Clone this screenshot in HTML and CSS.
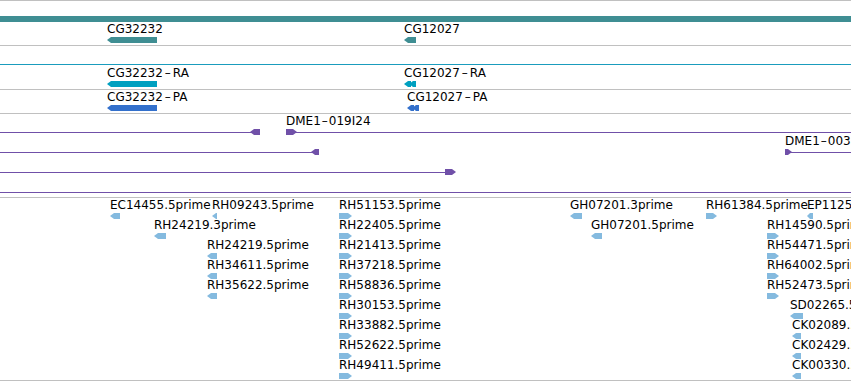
FILE: index.html
```html
<!DOCTYPE html>
<html lang="en">
<head>
  <meta charset="UTF-8">
  <title>Genome browser tracks</title>
  <link rel="stylesheet" href="styles.css">
</head>
<body>
  <div class="browser">
    <!-- gene track -->
    <section class="track track-gene">
      <div class="span-bar"></div>
      <div class="row row-gene">
        <div class="feat" style="left:107px">
          <div class="label">CG32232</div>
          <div class="glyph left c-gene" style="width:50px"></div>
        </div>
        <div class="feat" style="left:404px">
          <div class="label">CG12027</div>
          <div class="glyph left c-gene" style="width:12px"></div>
        </div>
      </div>
    </section>

    <section class="track track-empty"></section>

    <!-- transcripts -->
    <section class="track track-rna">
      <div class="row row-rna">
        <div class="feat" style="left:107px">
          <div class="label">CG32232<span class="dash">–</span>RA</div>
          <div class="glyph left c-rna" style="width:50px"></div>
        </div>
        <div class="feat" style="left:404px">
          <div class="label">CG12027<span class="dash">–</span>RA</div>
          <div class="chevs">
            <div class="chev c-rna"></div>
            <div class="chev c-rna"></div>
          </div>
        </div>
      </div>
    </section>

    <!-- polypeptides -->
    <section class="track track-pep">
      <div class="row row-pep">
        <div class="feat" style="left:107px">
          <div class="label">CG32232<span class="dash">–</span>PA</div>
          <div class="glyph left c-pep" style="width:50px"></div>
        </div>
        <div class="feat" style="left:407px">
          <div class="label">CG12027<span class="dash">–</span>PA</div>
          <div class="chevs">
            <div class="chev c-pep"></div>
            <div class="chev c-pep"></div>
          </div>
        </div>
      </div>
    </section>

    <!-- BAC clones -->
    <section class="track track-bac">
      <div class="row">
        <div class="bac-line" style="left:0;width:252px"></div>
        <div class="head left" style="left:250px;width:10px"></div>
        <div class="feat" style="left:286px">
          <div class="label">DME1<span class="dash short">–</span>019I24</div>
          <div class="head right static" style="width:11px"></div>
        </div>
        <div class="bac-line" style="left:290px;right:0"></div>
      </div>
      <div class="row">
        <div class="bac-line" style="left:0;width:313px"></div>
        <div class="head left" style="left:311px;width:8px"></div>
        <div class="feat" style="left:785px">
          <div class="label">DME1<span class="dash short">–</span>003</div>
          <div class="head right static" style="width:7px"></div>
        </div>
        <div class="bac-line" style="left:788px;right:0"></div>
      </div>
      <div class="row">
        <div class="bac-line" style="left:0;width:450px"></div>
        <div class="head right" style="left:445px;width:11px"></div>
      </div>
      <div class="row">
        <div class="bac-line" style="left:0;right:0"></div>
      </div>
    </section>

    <!-- ESTs -->
    <section class="track track-est">
      <div class="row">
        <div class="feat" style="left:110px"><div class="label">EC14455.5prime</div><div class="glyph left c-est" style="width:10px"></div></div>
        <div class="feat" style="left:212px"><div class="label">RH09243.5prime</div><div class="glyph left c-est" style="width:5px"></div></div>
        <div class="feat" style="left:339px"><div class="label">RH51153.5prime</div><div class="glyph right c-est" style="width:13px"></div></div>
        <div class="feat" style="left:570px"><div class="label">GH07201.3prime</div><div class="glyph left c-est" style="width:12px"></div></div>
        <div class="feat" style="left:706px"><div class="label">RH61384.5prime</div><div class="glyph right c-est" style="width:11px"></div></div>
        <div class="feat" style="left:807px"><div class="label">EP1125</div><div class="glyph left c-est narrow" style="width:6px"></div></div>
      </div>
      <div class="row">
        <div class="feat" style="left:154px"><div class="label">RH24219.3prime</div><div class="glyph left c-est" style="width:12px"></div></div>
        <div class="feat" style="left:339px"><div class="label">RH22405.5prime</div><div class="glyph right c-est" style="width:13px"></div></div>
        <div class="feat" style="left:591px"><div class="label">GH07201.5prime</div><div class="glyph left c-est" style="width:11px"></div></div>
        <div class="feat" style="left:767px"><div class="label">RH14590.5prime</div><div class="glyph right c-est" style="width:12px"></div></div>
      </div>
      <div class="row">
        <div class="feat" style="left:207px"><div class="label">RH24219.5prime</div><div class="glyph left c-est" style="width:10px"></div></div>
        <div class="feat" style="left:339px"><div class="label">RH21413.5prime</div><div class="glyph right c-est" style="width:13px"></div></div>
        <div class="feat" style="left:767px"><div class="label">RH54471.5prime</div><div class="glyph right c-est" style="width:12px"></div></div>
      </div>
      <div class="row">
        <div class="feat" style="left:207px"><div class="label">RH34611.5prime</div><div class="glyph left c-est" style="width:10px"></div></div>
        <div class="feat" style="left:339px"><div class="label">RH37218.5prime</div><div class="glyph right c-est" style="width:13px"></div></div>
        <div class="feat" style="left:767px"><div class="label">RH64002.5prime</div><div class="glyph right c-est" style="width:12px"></div></div>
      </div>
      <div class="row">
        <div class="feat" style="left:207px"><div class="label">RH35622.5prime</div><div class="glyph left c-est" style="width:10px"></div></div>
        <div class="feat" style="left:339px"><div class="label">RH58836.5prime</div><div class="glyph right c-est" style="width:13px"></div></div>
        <div class="feat" style="left:767px"><div class="label">RH52473.5prime</div><div class="glyph right c-est" style="width:12px"></div></div>
      </div>
      <div class="row">
        <div class="feat" style="left:339px"><div class="label">RH30153.5prime</div><div class="glyph right c-est" style="width:13px"></div></div>
        <div class="feat" style="left:790px"><div class="label">SD02265.5prime</div><div class="glyph left c-est" style="width:13px"></div></div>
      </div>
      <div class="row">
        <div class="feat" style="left:339px"><div class="label">RH33882.5prime</div><div class="glyph right c-est" style="width:13px"></div></div>
        <div class="feat" style="left:792px"><div class="label">CK02089.5prime</div><div class="glyph left c-est" style="width:9px"></div></div>
      </div>
      <div class="row">
        <div class="feat" style="left:339px"><div class="label">RH52622.5prime</div><div class="glyph right c-est" style="width:13px"></div></div>
        <div class="feat" style="left:792px"><div class="label">CK02429.5prime</div><div class="glyph left c-est" style="width:9px"></div></div>
      </div>
      <div class="row">
        <div class="feat" style="left:339px"><div class="label">RH49411.5prime</div><div class="glyph right c-est" style="width:13px"></div></div>
        <div class="feat" style="left:792px"><div class="label">CK00330.5prime</div><div class="glyph left c-est" style="width:9px"></div></div>
      </div>
    </section>
  </div>
</body>
</html>
```

FILE: styles.css
```css
body {
  margin: 0;
  background: #fff;
  font-family: "DejaVu Sans", sans-serif;
  color: #000;
}
.browser {
  width: 851px;
  height: 381px;
  overflow: hidden;
  border-top: 1px solid #c0c0c0;
  box-sizing: border-box;
}
.track {
  position: relative;
  border-bottom: 1px solid #c0c0c0;
}
.track-gene {
  height: 29px;
  padding-top: 15px;
}
.span-bar {
  height: 6px;
  background: #3f8e93;
}
.track-empty {
  height: 18px;
  border-bottom-color: #1a9cbd;
}
.track-rna {
  height: 24px;
}
.track-pep {
  height: 23px;
}
.track-bac {
  height: 83px;
}
.track-est {
  height: 182px;
}
.row {
  position: relative;
  height: 20px;
}
.row-gene {
  height: 23px;
}
.row-rna {
  top: 1px;
}

/* features */
.feat {
  position: absolute;
  top: 0;
}
.label {
  font-size: 12px;
  line-height: 14px;
  white-space: nowrap;
}
.dash {
  display: inline-block;
  width: 10px;
  text-align: center;
}
.dash.short {
  width: 8px;
}
.glyph {
  height: 6px;
  margin-top: 1px;
}
.glyph.left {
  clip-path: polygon(0 50%, 4px 0, 100% 0, 100% 100%, 4px 100%);
}
.glyph.right {
  clip-path: polygon(0 0, calc(100% - 4px) 0, 100% 50%, calc(100% - 4px) 100%, 0 100%);
}
.glyph.narrow {
  clip-path: polygon(0 50%, 3px 0, 100% 0, 100% 100%, 3px 100%);
}
.chevs {
  display: flex;
  margin-top: 1px;
  height: 6px;
}
.chev {
  width: 7px;
  height: 6px;
  clip-path: polygon(0 50%, 4px 0, 100% 0, 100% 100%, 4px 100%);
}
.chev + .chev {
  margin-left: -2px;
}
.c-gene { background: #3f8e93; }
.c-rna { background: #00a0c0; }
.c-pep { background: #3370cc; }
.c-est { background: #84badf; }

/* BAC clone ends */
.bac-line {
  position: absolute;
  top: 18px;
  height: 1px;
  background: #7050a8;
}
.head {
  position: absolute;
  top: 15px;
  height: 6px;
  background: #7050a8;
}
.head.static {
  position: static;
  margin-top: 1px;
}
.head.left {
  clip-path: polygon(0 50%, 4px 0, 100% 0, 100% 100%, 4px 100%);
}
.head.right {
  clip-path: polygon(0 0, calc(100% - 4px) 0, 100% 50%, calc(100% - 4px) 100%, 0 100%);
}
```
